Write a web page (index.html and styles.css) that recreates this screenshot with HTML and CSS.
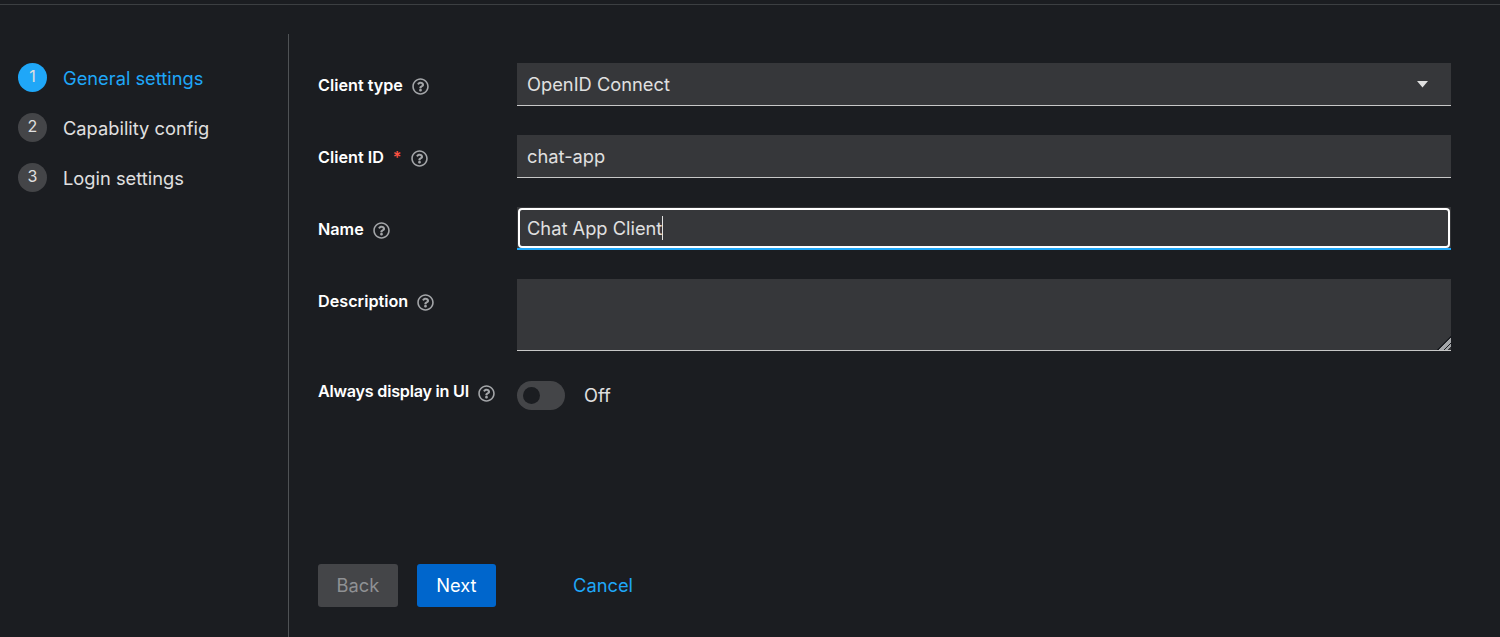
FILE: index.html
```html
<!DOCTYPE html>
<html lang="en">
<head>
<meta charset="utf-8"/>
<title>Create client</title>
<link rel="stylesheet" href="styles.css">
</head>
<body>
<svg class="defs" width="0" height="0">
  <symbol id="help" viewBox="0 0 512 512">
    <path d="M256 8C119.043 8 8 119.083 8 256c0 136.997 111.043 248 248 248s248-111.003 248-248C504 119.083 392.957 8 256 8zm0 448c-110.532 0-200-89.431-200-200 0-110.495 89.472-200 200-200 110.491 0 200 89.471 200 200 0 110.569-89.431 200-200 200zm107.244-255.2c0 67.052-72.421 68.084-72.421 92.863V300c0 6.627-5.373 12-12 12h-45.647c-6.627 0-12-5.373-12-12v-8.659c0-35.745 27.1-50.034 47.579-61.516 17.561-9.845 28.324-16.541 28.324-29.579 0-17.246-21.999-28.693-39.784-28.693-23.189 0-33.894 10.977-48.942 29.969-4.057 5.12-11.46 6.071-16.666 2.124l-27.824-21.098c-5.107-3.872-6.251-11.066-2.644-16.363C184.846 131.491 214.94 112 261.794 112c49.071 0 101.45 38.304 101.45 88.8zM298 368c0 23.159-18.841 42-42 42s-42-18.841-42-42 18.841-42 42-42 42 18.841 42 42z"/>
  </symbol>
</svg>
<div class="wizard">
  <nav class="steps">
    <div class="step current"><span class="num">1</span><span class="step-name">General settings</span></div>
    <div class="step"><span class="num">2</span><span class="step-name">Capability config</span></div>
    <div class="step"><span class="num">3</span><span class="step-name">Login settings</span></div>
  </nav>
  <main class="content">
    <form class="form">
      <div class="label">Client type <svg class="help"><use href="#help"/></svg></div>
      <div class="control select">OpenID Connect
        <svg class="caret" viewBox="0 0 11 7"><path d="M0 0h11L5.500 6.500z"/></svg>
      </div>

      <div class="label">Client ID <span class="req">*</span> <svg class="help"><use href="#help"/></svg></div>
      <input class="control" type="text" value="chat-app">

      <div class="label">Name <svg class="help"><use href="#help"/></svg></div>
      <div class="control focused">Chat App Client<span class="cursor"></span></div>

      <div class="label">Description <svg class="help"><use href="#help"/></svg></div>
      <textarea class="control area"></textarea>

      <div class="label last">Always display in UI <svg class="help"><use href="#help"/></svg></div>
      <div class="switch-row"><span class="switch"><span class="knob"></span></span><span class="switch-text">Off</span></div>
    </form>
    <div class="actions">
      <button class="btn back" type="button">Back</button>
      <button class="btn next" type="button">Next</button>
      <a class="cancel" href="#">Cancel</a>
    </div>
  </main>
</div>
</body>
</html>
```

FILE: styles.css
```css
html, body {
  height: 100%;
}
body {
  margin: 0;
  padding-top: 4px;
  box-sizing: border-box;
  background: #1b1d21;
  color: #e0e0e0;
  font-family: 'Inter', sans-serif;
  font-size: 18.300px;
  color-scheme: dark;
  display: flex;
  flex-direction: column;
  overflow: hidden;
}
.defs {
  position: absolute;
}
.wizard {
  flex: 1;
  display: flex;
  border-top: 1px solid #3c3f42;
  padding-top: 29px;
  min-height: 0;
}
.steps {
  width: 289px;
  box-sizing: border-box;
  padding: 29px 0 0 18px;
  border-right: 1px solid #4f5255;
  flex: none;
}
.step {
  display: flex;
  align-items: center;
  gap: 16px;
  height: 29px;
  margin-bottom: 21px;
}
.step-name {
  padding-top: 1px;
}
.step.current {
  color: #1fa7f8;
}
.num {
  width: 29px;
  height: 29px;
  border-radius: 50%;
  background: #444548;
  color: #e0e0e0;
  display: flex;
  align-items: center;
  justify-content: center;
  font-size: 16px;
  padding-bottom: 3px;
  box-sizing: border-box;
}
.current .num {
  background: #1fa7f8;
}
.content {
  flex: 1;
  padding: 29px 49px 30px 29px;
  display: flex;
  flex-direction: column;
  justify-content: space-between;
}
.form {
  display: grid;
  grid-template-columns: 199px 1fr;
  row-gap: 29px;
}
.label {
  font-size: 16.200px;
  font-weight: 600;
  color: #fff;
  padding-top: 12px;
  display: flex;
  align-items: flex-start;
  gap: 9px;
}
.label.last {
  padding-top: 0;
  letter-spacing: -0.250px;
}
.req {
  color: #fe5142;
}
.help {
  width: 17px;
  height: 17px;
  fill: #a3a5a8;
  margin-top: 3px;
}
.last .help {
  margin-top: 4px;
}
.control {
  box-sizing: border-box;
  width: 100%;
  height: 43px;
  margin: 0;
  padding: 0 10px;
  background: #36373a;
  border: 0;
  border-bottom: 1px solid #c7c7c7;
  border-radius: 0;
  color: #e0e0e0;
  font-family: inherit;
  font-size: inherit;
  display: flex;
  align-items: center;
  outline: none;
}
.select {
  justify-content: space-between;
}
.caret {
  width: 11px;
  height: 7px;
  fill: #e0e0e0;
  margin-right: 13px;
}
.focused {
  position: relative;
  border-bottom: 2px solid #1fa7f8;
}
.focused::before {
  content: "";
  position: absolute;
  top: 1px;
  left: 1px;
  right: 1px;
  bottom: 0;
  border: 2px solid #fff;
  border-radius: 4px;
}
.cursor {
  width: 1px;
  height: 24px;
  background: #e0e0e0;
}
.area {
  display: block;
  height: 72px;
  margin-bottom: 1px;
  padding: 8px 10px;
  resize: both;
}
.area::-webkit-resizer {
  background: linear-gradient(135deg, transparent 52%, #1b1d21 52%, #1b1d21 60%, #a3a5a8 60%, #a3a5a8 74%, #1b1d21 74%, #1b1d21 80%, #a3a5a8 80%, #a3a5a8 88%, transparent 88%);
}
.switch-row {
  display: flex;
  align-items: center;
  gap: 19px;
  height: 29px;
}
.switch-text {
  padding-bottom: 1px;
}
.switch {
  width: 48px;
  height: 29px;
  border-radius: 15px;
  background: #444548;
  display: flex;
  align-items: center;
  padding-left: 6px;
  box-sizing: border-box;
}
.knob {
  width: 17px;
  height: 17px;
  border-radius: 50%;
  background: #1b1d21;
}
.actions {
  display: flex;
  align-items: center;
  gap: 19px;
}
.btn {
  height: 43px;
  padding: 0 18.500px 2px;
  border: 0;
  border-radius: 3px;
  font-family: inherit;
  font-size: inherit;
}
.back {
  background: #444548;
  color: #8f9194;
}
.next {
  padding: 0 19.500px 2px;
  background: #06c;
  color: #fff;
}
.cancel {
  margin-left: 58px;
  padding-bottom: 2px;
  color: #1fa7f8;
  text-decoration: none;
}
```
